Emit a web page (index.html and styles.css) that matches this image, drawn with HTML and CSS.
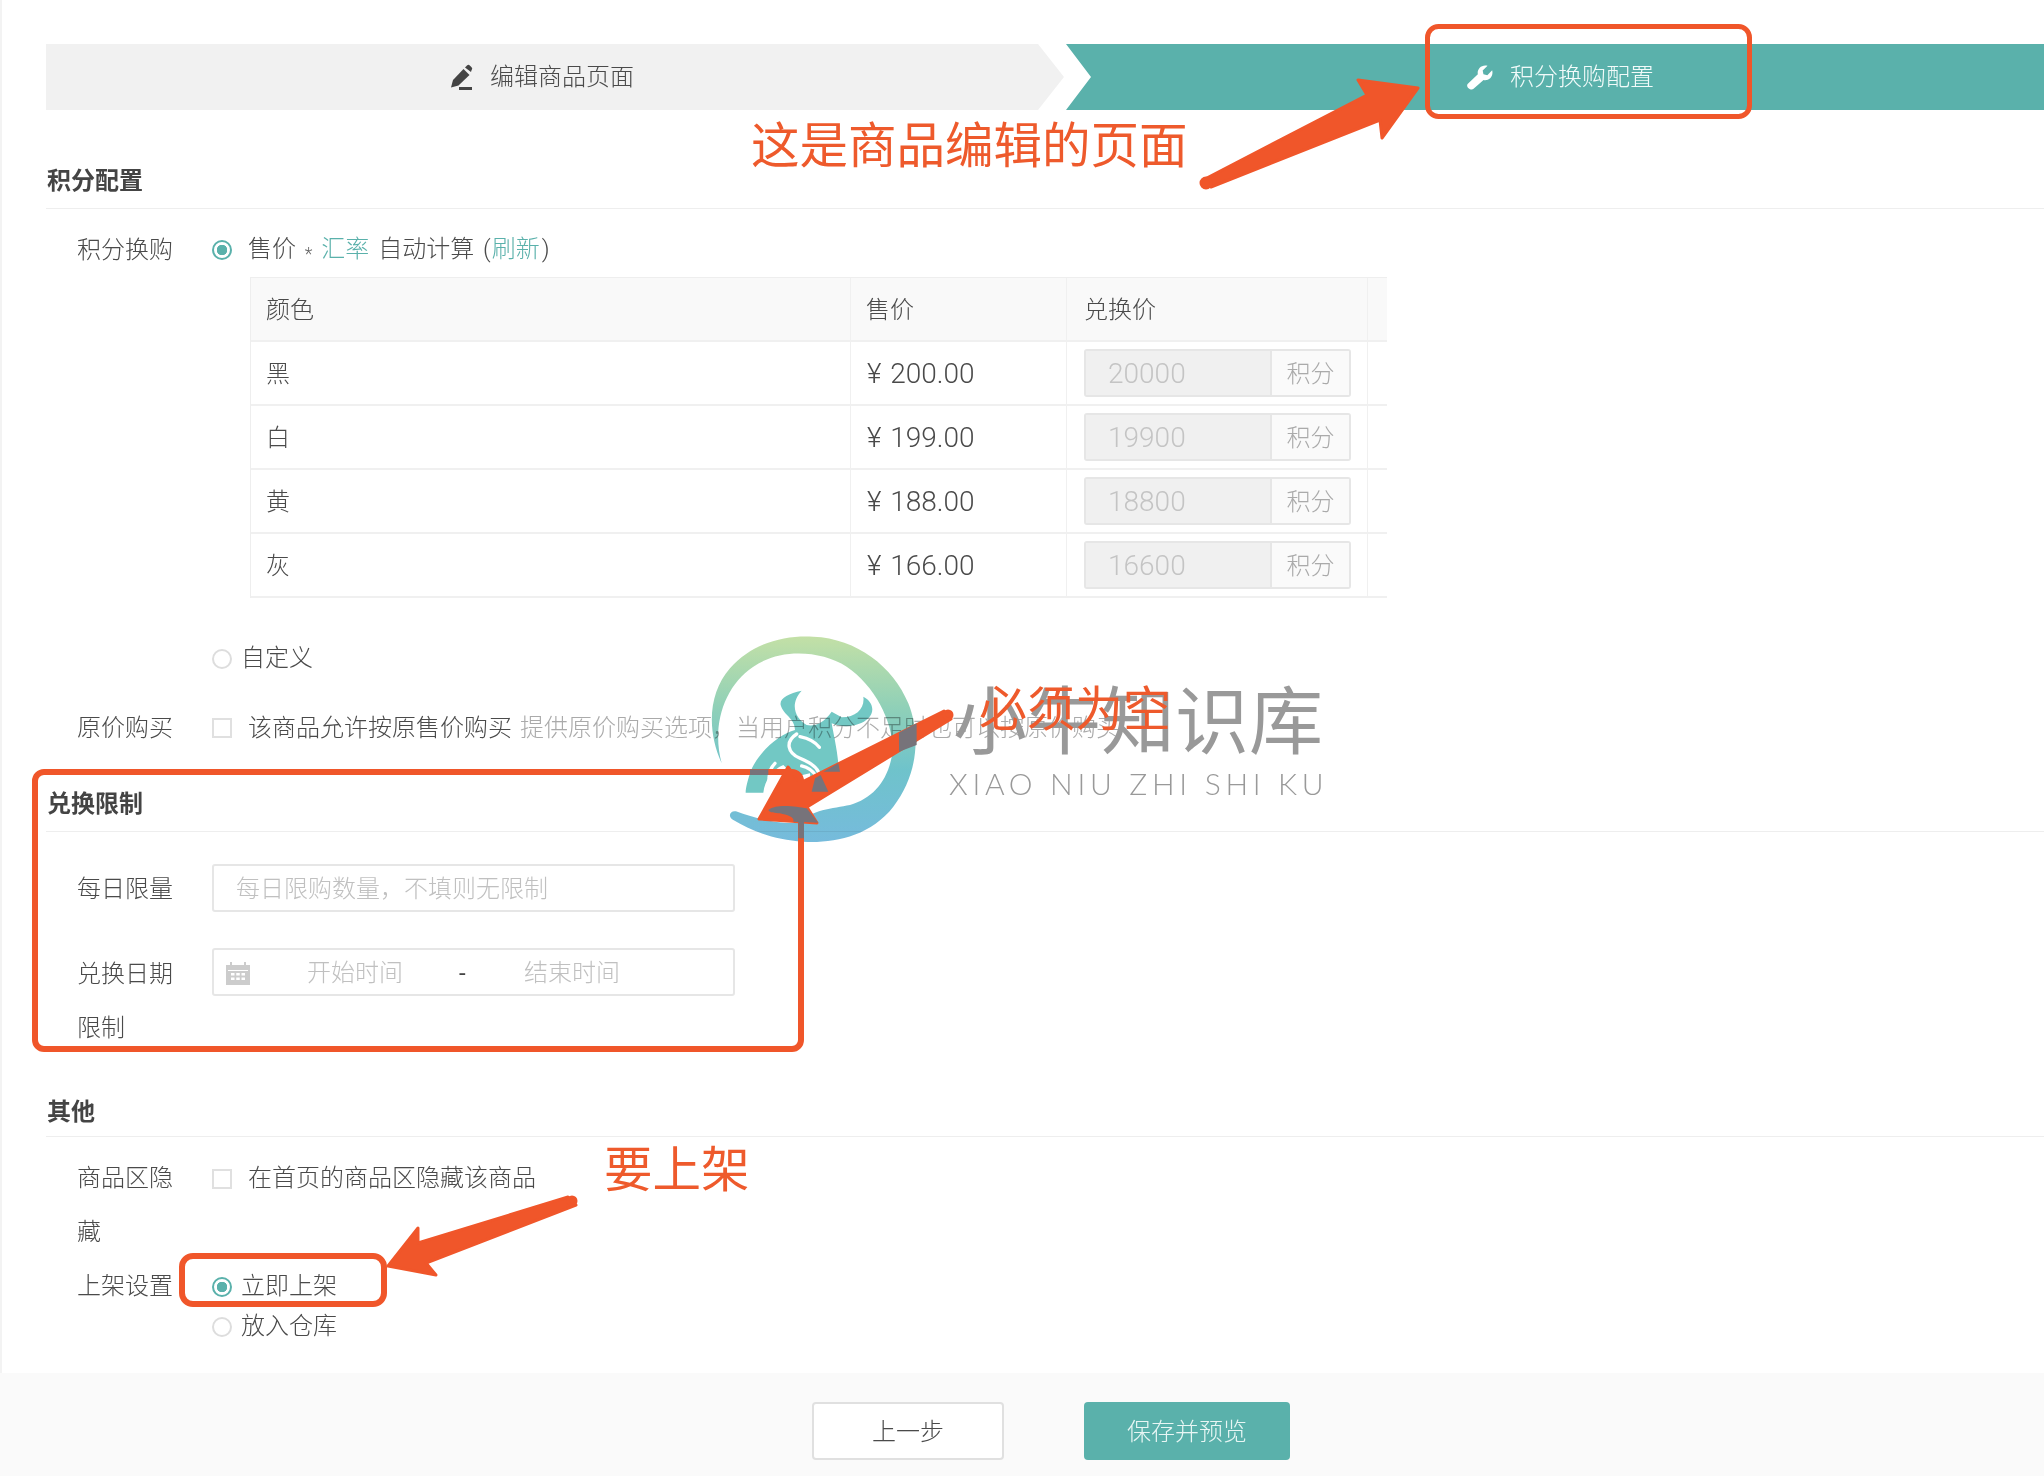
FILE: index.html
```html
<!DOCTYPE html>
<html lang="zh-CN">
<head>
<meta charset="utf-8">
<title>积分换购配置</title>
<link rel="stylesheet" href="styles.css">
</head>
<body>
<div class="page">
  <main class="main">
    <nav class="steps">
      <div class="step step-first">
        <svg class="step-icon" viewBox="0 0 24 26"><path fill="#444" d="M1 23.5 3 16 13.5 5 19.5 11 8.5 21.5Z"/><path fill="#444" d="M15 3.5 17 1.4a2 2 0 0 1 2.8 0l1.8 1.8a2 2 0 0 1 0 2.8L21 8Z"/><rect fill="#444" x="9" y="23" width="13" height="3"/></svg>
        <span>编辑商品页面</span>
      </div>
      <div class="step step-active">
        <svg class="step-icon step-icon-wide" viewBox="0 0 26 24"><path fill="#fff" d="M1.5 18.5 11 9.5C10 5 14 0 20 1.5L15.5 6l.7 3.500 3.600.8 4.500-4.500c1.500 6-3.300 10-8 9L7 23c-2.500 2.200-7.500-1.800-5.500-4.500Z"/></svg>
        <span>积分换购配置</span>
      </div>
    </nav>

    <h2 class="section-title">积分配置</h2>
    <div class="row row-exchange">
      <div class="label">积分换购</div>
      <div class="radio radio-on"></div>
      <div class="option option-wide option-formula">售价 <span class="star">*</span> <a class="link">汇率</a> 自动计算 (<a class="link link-refresh">刷新</a>)</div>
    </div>
    <table class="price-table">
      <colgroup><col class="col-a"><col class="col-b"><col class="col-c"><col class="col-d"></colgroup>
      <thead><tr><th>颜色</th><th>售价</th><th class="cell-points">兑换价</th><th></th></tr></thead>
      <tbody>
        <tr><td>黑</td><td class="money">¥ 200.00</td><td class="cell-points"><div class="points"><span class="points-val">20000</span><span class="points-unit">积分</span></div></td><td></td></tr>
        <tr><td>白</td><td class="money">¥ 199.00</td><td class="cell-points"><div class="points"><span class="points-val">19900</span><span class="points-unit">积分</span></div></td><td></td></tr>
        <tr><td>黄</td><td class="money">¥ 188.00</td><td class="cell-points"><div class="points"><span class="points-val">18800</span><span class="points-unit">积分</span></div></td><td></td></tr>
        <tr><td>灰</td><td class="money">¥ 166.00</td><td class="cell-points"><div class="points"><span class="points-val">16600</span><span class="points-unit">积分</span></div></td><td></td></tr>
      </tbody>
    </table>
    <div class="row row-custom">
      <div class="label"></div>
      <div class="radio radio-low"></div>
      <div class="option">自定义</div>
    </div>
    <div class="row row-origin">
      <div class="label">原价购买</div>
      <div class="check"></div>
      <div class="option option-wide">该商品允许按原售价购买<span class="hint">提供原价购买选项，当用户积分不足时也可以按原价购买</span></div>
    </div>

    <h2 class="section-title section-limit">兑换限制</h2>
    <div class="row row-daily">
      <div class="label label-daily">每日限量</div>
      <div class="field"><span class="placeholder">每日限购数量，不填则无限制</span></div>
    </div>
    <div class="row row-date">
      <div class="label label-wrap">兑换日期限制</div>
      <div class="field field-date">
        <svg class="cal" viewBox="0 0 24 23"><path fill="#ccc" d="M0 3h4V0h2v3h12V0h2v3h4v20H0Z"/><g fill="#fff"><rect x="2" y="8" width="20" height="1"/><rect x="5" y="11" width="3.500" height="2.500"/><rect x="10.250" y="11" width="3.500" height="2.500"/><rect x="15.500" y="11" width="3.500" height="2.500"/><rect x="5" y="15.500" width="3.500" height="2.500"/><rect x="10.250" y="15.500" width="3.500" height="2.500"/><rect x="15.500" y="15.500" width="3.500" height="2.500"/></g></svg>
        <span class="placeholder date-start">开始时间</span>
        <span class="date-dash">-</span>
        <span class="placeholder date-end">结束时间</span>
      </div>
    </div>

    <h2 class="section-title section-other">其他</h2>
    <div class="row row-hide">
      <div class="label label-wrap">商品区隐藏</div>
      <div class="check check-hide"></div>
      <div class="option option-wide option-hide">在首页的商品区隐藏该商品</div>
    </div>
    <div class="row row-shelf">
      <div class="label label-wrap">上架设置</div>
      <div class="shelf-options">
        <div class="shelf-option"><div class="radio radio-on radio-low"></div><div class="option">立即上架</div></div>
        <div class="shelf-option"><div class="radio radio-low"></div><div class="option">放入仓库</div></div>
      </div>
    </div>
  </main>

  <footer class="footer">
    <button class="btn btn-prev">上一步</button>
    <button class="btn btn-save">保存并预览</button>
  </footer>

  <svg class="overlay" viewBox="0 0 2044 1476">
    <defs>
      <linearGradient id="ring" x1="0" y1="0" x2="0" y2="1">
        <stop offset="0" stop-color="#c3e0a6"/>
        <stop offset=".35" stop-color="#8fd0b8"/>
        <stop offset=".65" stop-color="#6fc3cb"/>
        <stop offset="1" stop-color="#76bbdc"/>
      </linearGradient>
      <mask id="swirl">
        <rect x="0" y="0" width="700" height="700" fill="#fff"/>
        <path fill="none" stroke="#000" stroke-width="10" stroke-linecap="round" d="M290 312C255 335 262 368 300 385 322 395 345 405 355 425M300 320C325 325 345 335 358 352M225 400C210 415 205 435 208 455M305 408C325 412 340 425 350 440"/>
      </mask>
    </defs>
    <g class="logo" transform="translate(700 630) scale(.3333)" mask="url(#swirl)">
      <path fill="url(#ring)" d="M65 400C20 300 25 190 90 115 160 35 260 15 340 20 470 25 580 110 625 220 665 320 650 440 580 530 510 620 400 640 310 635 220 630 150 600 100 570 80 558 92 538 112 545 170 565 240 585 300 578 330 540 400 535 450 525 520 505 565 450 577 370 585 290 530 170 440 110 360 60 240 55 160 110 70 170 35 290 65 400Z"/>
      <path fill="#72c8c4" d="M305 182C265 190 238 205 242 225 250 255 285 265 285 300 240 310 170 370 150 430 142 455 137 475 137 488L190 488C195 450 215 420 250 405L285 440 330 430 335 485 385 485 360 440 415 400C410 350 400 310 395 280 430 295 480 290 505 265 525 245 520 215 490 200 495 235 470 262 425 262L395 245C370 280 345 290 320 285 290 270 265 225 305 182Z"/>
    </g>
    <g fill="#f0562a" stroke="#f0562a" stroke-width="3" stroke-linejoin="round">
      <path d="M1203 180 1367 95 1358 80 1418 88 1382 138 1380 120 1211 187Z"/>
      <circle cx="1206" cy="183" r="5"/>
      <path d="M944 711 800 783 788 767 759 819 817 823 807 807 951 719Z"/>
      <circle cx="948" cy="715" r="4"/>
      <path d="M568 1197 418 1243 418 1228 388 1266 436 1275 426 1263 576 1205Z"/>
      <circle cx="572" cy="1201" r="4"/>
    </g>
    <g fill="none" stroke="#f0562a">
      <rect x="1427.500" y="26.500" width="322" height="90" rx="11" stroke-width="5"/>
      <rect x="35" y="772" width="766" height="277" rx="9" stroke-width="6"/>
      <rect x="182" y="1256" width="202" height="48" rx="11" stroke-width="6"/>
    </g>
    <g class="shade" transform="translate(700 630) scale(.3333)">
      <path d="M205 540C230 520 290 530 320 535L355 578 312 576V625H295V576L280 575C285 560 260 555 240 550 225 548 210 550 205 540Z"/>
      <path d="M335 485 345 445 362 435 385 485Z"/>
      <path d="M597 308 650 280V345L597 365Z"/>
      <path d="M150 418H205V435H150Z"/>
      <path d="M370 425 415 400 420 425Z"/>
    </g>
  </svg>

  <div class="wm-cn">小牛知识库</div>
  <div class="wm-en">XIAO NIU ZHI SHI KU</div>
  <div class="note note-title">这是商品编辑的页面</div>
  <div class="note note-must">必须为空</div>
  <div class="note note-up">要上架</div>
</div>
</body>
</html>
```
FILE: styles.css
```css
* { box-sizing: border-box; }
html, body { margin: 0; padding: 0; }
body {
  background: #fff;
  color: #4a4a4a;
  font-family: Roboto, "Noto Sans CJK SC", sans-serif;
  font-size: 24px;
  font-weight: 300;
}
.page {
  position: relative;
  width: 2044px;
  height: 1476px;
  overflow: hidden;
}
.main {
  border-left: 2px solid #f3f3f3;
  height: 1373px;
  padding: 44px 0 0 44px;
}

/* steps */
.steps { display: flex; height: 66px; gap: 2px; }
.step {
  display: flex;
  align-items: center;
  justify-content: center;
  gap: 16px;
  height: 66px;
  line-height: 68px;
}
.step-first {
  width: 1018px;
  padding-right: 26px;
  background: #f1f1f1;
  clip-path: polygon(0 0, 992px 0, 100% 50%, 992px 100%, 0 100%);
}
.step-active {
  flex: 1;
  padding-left: 12px;
  background: #5ab1ab;
  color: #f2fbfa;
  clip-path: polygon(0 0, 100% 0, 100% 100%, 0 100%, 25px 50%);
}
.step-icon { width: 24px; height: 26px; }
.step-icon-wide { width: 28px; margin-left: -2px; }

/* section titles */
.section-title {
  margin: 46px 0 0;
  height: 53px;
  padding: 0 0 2px 1px;
  font-size: 24px;
  line-height: 50px;
  font-weight: 700;
  color: #444;
  border-bottom: 1px solid #eee;
}
.section-limit { margin-top: 31px; }
.section-other { margin-top: 29px; padding-top: 4px; line-height: 48px; }

/* rows */
.row { display: flex; align-items: center; }
.label {
  flex: none;
  width: 100px;
  margin: 0 35px 0 31px;
  line-height: 40px;
}
.label-wrap { width: 96px; margin-right: 39px; line-height: 54px; }
.label-daily { padding-top: 2px; }
.option { margin-left: 9px; line-height: 40px; white-space: nowrap; }
.option-wide { margin-left: 16px; }
.option-formula { word-spacing: 3px; padding-top: 2px; }
.star { color: #666; font-size: 18px; vertical-align: -3px; }
.link { color: #5ab1ab; }
.link-refresh { margin: 0 2px 0 1px; }
.hint { margin-left: 8px; color: #aaa; }
.radio {
  flex: none;
  width: 20px;
  height: 20px;
  border: 2px solid #ddd;
  border-radius: 50%;
  background: #fff;
}
.radio-on {
  border-color: #5ab1ab;
  background: radial-gradient(circle, #5ab1ab 0 5px, #fff 5.500px);
}
.radio-low { margin-top: 2px; }
.check {
  flex: none;
  width: 20px;
  height: 20px;
  border: 2px solid #e0e0e0;
  background: #fff;
}

.row-exchange { margin-top: 21px; height: 40px; }
.row-custom { margin-top: 40px; height: 40px; }
.row-origin { margin-top: 30px; height: 40px; }
.row-daily { margin-top: 32px; height: 48px; }
.row-date { margin-top: 35px; align-items: flex-start; }
.row-hide { margin-top: 14px; align-items: flex-start; }
.row-shelf { align-items: flex-start; }
.check-hide { margin-top: 18px; }
.option-hide { margin-top: 7px; }

/* table */
.price-table {
  margin: 7px 0 0 204px;
  width: 1136px;
  table-layout: fixed;
  border-collapse: separate;
  border-spacing: 0;
  border-top: 1px solid #eee;
  border-left: 1px solid #eee;
}
.col-a { width: 600px; }
.col-b { width: 216px; }
.col-c { width: 301px; }
.col-d { width: 19px; }
.price-table th, .price-table td {
  padding: 2px 0 0 15px;
  height: 64px;
  border-bottom: 2px solid #f0f0f0;
  border-right: 1px solid #f0f0f0;
  text-align: left;
  font-weight: 300;
  color: #4a4a4a;
  line-height: 40px;
}
.price-table th { background: #f9f9f9; }
.price-table th:last-child, .price-table td:last-child { border-right: 0; }
.price-table .money { font-size: 28px; padding-left: 16px; word-spacing: 2px; }
.price-table .cell-points { padding-left: 17px; }
.price-table td.cell-points { padding-top: 0; }
.points {
  display: flex;
  width: 267px;
  height: 48px;
  border: 2px solid #e6e6e6;
  border-radius: 3px;
}
.points-val {
  flex: 1;
  padding-left: 22px;
  background: #f0f0f0;
  color: #c4c4c4;
  font-size: 28px;
  line-height: 46px;
}
.points-unit {
  width: 79px;
  text-align: center;
  background: #fafafa;
  border-left: 2px solid #e6e6e6;
  color: #aaa;
  line-height: 46px;
}

/* fields */
.field {
  width: 523px;
  height: 48px;
  padding: 2px 0 0 22px;
  border: 2px solid #e6e6e6;
  border-radius: 3px;
  line-height: 44px;
  display: flex;
  align-items: center;
}
.placeholder { color: #c0c0c0; white-space: nowrap; }
.field-date { margin-top: 1px; padding-left: 12px; }
.cal { width: 24px; height: 23px; flex: none; }
.date-start { margin-left: 57px; }
.date-dash { margin-left: 56px; width: 8px; color: #444; font-weight: 400; }
.date-end { margin-left: 57px; }

/* shelf */
.shelf-options { margin-top: 7px; }
.shelf-option { display: flex; align-items: center; height: 40px; }

/* footer */
.footer {
  display: flex;
  justify-content: center;
  gap: 80px;
  height: 103px;
  padding: 29px 0 0 58px;
  background: #fafafa;
}
.btn {
  height: 58px;
  border-radius: 4px;
  font: inherit;
  padding: 0 0 3px;
}
.btn-prev {
  width: 192px;
  background: #fff;
  border: 2px solid #e0e0e0;
  color: #4a4a4a;
}
.btn-save {
  width: 206px;
  background: #5ab1ab;
  border: 0;
  color: #e8f6f4;
}

/* annotations over the page */
.overlay {
  position: absolute;
  left: 0;
  top: 0;
  width: 2044px;
  height: 1476px;
  pointer-events: none;
}
.logo { mix-blend-mode: multiply; }
.shade { fill: #77737a; }
.wm-cn {
  position: absolute;
  left: 953px;
  top: 678px;
  font-size: 74px;
  font-weight: 400;
  line-height: 90px;
  color: #999;
  white-space: nowrap;
}
.wm-en {
  position: absolute;
  left: 949px;
  top: 763px;
  font-family: Lato, sans-serif;
  font-weight: 300;
  font-size: 30px;
  line-height: 40px;
  letter-spacing: 4.700px;
  color: #999;
  white-space: nowrap;
}
.note {
  position: absolute;
  color: #ee5a2c;
  white-space: nowrap;
  font-family: "Noto Sans CJK SC", sans-serif;
  font-weight: 400;
}
.note-title { left: 751px; top: 114px; font-size: 48.500px; line-height: 56px; }
.note-must { left: 979px; top: 677px; font-size: 48px; line-height: 56px; }
.note-up { left: 604px; top: 1138px; font-size: 48.500px; line-height: 56px; }
```
